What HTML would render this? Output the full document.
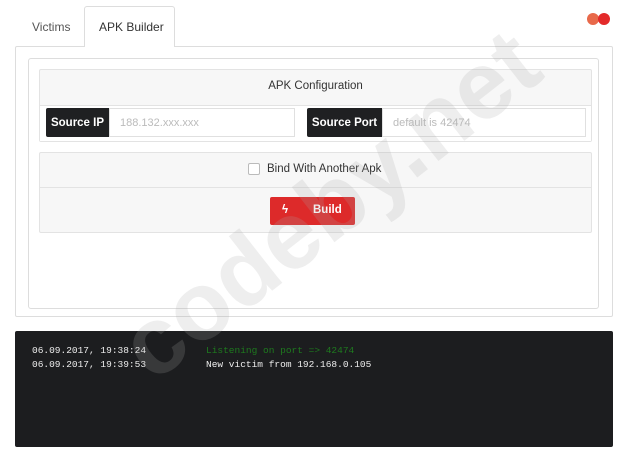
<!DOCTYPE html>
<html><head><meta charset="utf-8"><style>
*{box-sizing:border-box;margin:0;padding:0}
body{width:623px;height:450px;background:#fff;font-family:"Liberation Sans",sans-serif;position:relative;overflow:hidden}
.abs{position:absolute}
.tab{font-size:12px;color:#555}
.box{border:1px solid #e3e3e3;background:#f7f7f7;border-radius:2px}
.lbl{background:#1f2022;color:#fff;font-size:11.5px;font-weight:bold;display:flex;align-items:center;justify-content:center;border-radius:2px 0 0 2px}
.inp{background:#fff;border:1px solid #e0e0e0;font-size:11px;color:#bbb;display:flex;align-items:center;padding-left:10px}
.mono{font-family:"Liberation Mono",monospace;font-size:9.5px}
</style></head><body>
<div class="abs tab" style="left:32px;top:20px">Victims</div>
<div class="abs" style="left:15px;top:46px;width:598px;height:271px;border:1px solid #ddd;border-radius:2px"></div>
<div class="abs" style="left:84px;top:6px;width:91px;height:41px;border:1px solid #ddd;border-bottom:none;background:#fff;border-radius:3px 3px 0 0"></div>
<div class="abs tab" style="left:99px;top:20px;color:#333">APK Builder</div>
<div class="abs" style="left:587px;top:13px;width:12px;height:12px;border-radius:6px;background:#e8694a"></div>
<div class="abs" style="left:598px;top:13px;width:12px;height:12px;border-radius:6px;background:#e32a2a"></div>
<div class="abs" style="left:28px;top:58px;width:571px;height:251px;border:1px solid #ddd;border-radius:3px"></div>
<div class="abs box" style="left:39px;top:69px;width:553px;height:73px"></div>
<div class="abs" style="left:39px;top:80px;width:553px;text-align:center;font-size:11.5px;color:#333">APK Configuration</div>
<div class="abs" style="left:40px;top:105px;width:551px;height:36px;background:#fff;border-top:1px solid #e3e3e3"></div>
<div class="abs lbl" style="left:46px;top:108px;width:63px;height:29px">Source IP</div>
<div class="abs inp" style="left:109px;top:108px;width:186px;height:29px">188.132.xxx.xxx</div>
<div class="abs lbl" style="left:307px;top:108px;width:75px;height:29px">Source Port</div>
<div class="abs inp" style="left:382px;top:108px;width:204px;height:29px">default is 42474</div>
<div class="abs box" style="left:39px;top:152px;width:553px;height:81px"></div>
<div class="abs" style="left:40px;top:187px;width:551px;height:1px;background:#e3e3e3"></div>
<div class="abs" style="left:248px;top:163px;width:12px;height:12px;border:1px solid #bbb;background:#fff;border-radius:2px"></div>
<div class="abs" style="left:267px;top:163px;font-size:11.5px;color:#333">Bind With Another Apk</div>
<div class="abs" style="left:270px;top:197px;width:85px;height:28px;background:#dd2a2a;border-radius:2px;color:#fff;font-size:11.5px;font-weight:bold">
<span class="abs" style="left:12px;top:7px">ϟ</span><span class="abs" style="left:43px;top:7px">Build</span></div>
<div class="abs" style="left:15px;top:331px;width:598px;height:116px;background:#1c1d1f;border-radius:2px"></div>
<div class="abs mono" style="left:32px;top:345px;color:#eee">06.09.2017, 19:38:24</div>
<div class="abs mono" style="left:206px;top:345px;color:#1e7a1e">Listening on port =&gt; 42474</div>
<div class="abs mono" style="left:32px;top:359px;color:#eee">06.09.2017, 19:39:53</div>
<div class="abs mono" style="left:206px;top:359px;color:#eee">New victim from 192.168.0.105</div>
<div class="abs" style="left:0px;top:150px;width:660px;text-align:center;font-size:96px;font-weight:bold;color:rgba(170,170,170,0.2);transform:rotate(-38deg);transform-origin:center;white-space:nowrap">codeby.net</div>
</body></html>
